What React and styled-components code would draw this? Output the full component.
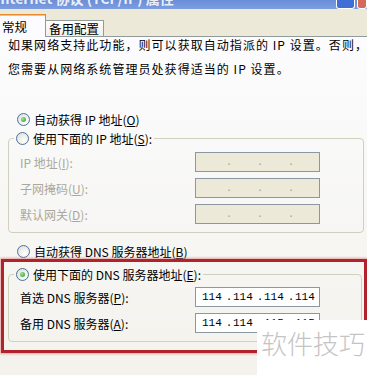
import React from 'react';
import styled, { createGlobalStyle } from 'styled-components';

const GlobalStyle = createGlobalStyle`
  html, body { margin: 0; padding: 0; }
  body {
    font-family: "Noto Sans CJK SC", sans-serif;
    font-size: 12px;
    color: #000;
  }
`;

const Dialog = styled.div`
  position: relative;
  width: 367px;
  height: 375px;
  overflow: hidden;
  display: flex;
  flex-direction: column;
  background: #ece9d8;
`;

const TitleBar = styled.div`
  flex: none;
  height: 9px;
  display: flex;
  align-items: flex-end;
  justify-content: space-between;
  overflow: hidden;
  background: linear-gradient(#6a8ed8, #7c9de0);
`;

const Title = styled.div`
  font: bold 14px/16px "Noto Sans CJK SC", sans-serif;
  color: #fff;
  margin: 0 0 3px -4px;
  white-space: nowrap;
  opacity: 0.85;
`;

const TitleButtons = styled.div`
  display: flex;
  gap: 2px;
  align-self: stretch;
`;

const TitleButton = styled.span`
  width: ${p => p.$w}px;
  height: 8px;
  border: 1px solid #fff;
  border-top: none;
  border-radius: 0 0 3px 3px;
  background: ${p => (p.$close ? '#d46a5a' : '#3d6fd6')};
`;

/* tabs */
const TabStrip = styled.div`
  flex: none;
  height: 27px;
  display: flex;
  align-items: flex-end;
  border-bottom: 1px solid #919b9c;
`;

const Tab = styled.div`
  box-sizing: border-box;
  height: ${p => (p.$active ? 23 : 16)}px;
  margin-bottom: ${p => (p.$active ? -1 : 0)}px;
  padding: ${p => (p.$active ? '0 18px 0 2px' : '0 4px 0 3px')};
  display: flex;
  align-items: center;
  font-size: 12.5px;
  white-space: nowrap;
  border-right: 1px solid #919b9c;
  border-top: ${p => (p.$active ? '1px solid #e68b2c' : '1px solid #919b9c')};
  box-shadow: ${p => (p.$active ? 'inset 0 1px #ffc73c' : 'none')};
  background: ${p => (p.$active ? '#fcfcfe' : 'linear-gradient(#fefefe, #f0efe8)')};
`;

/* page body */
const Page = styled.div`
  flex: 1;
  display: flex;
  flex-direction: column;
  padding: 0 3px 0 8px;
  background: linear-gradient(#fcfcfe, #f3f2ec);
`;

const Description = styled.p`
  margin: -4px 0 0;
  line-height: 24px;
  letter-spacing: 1.05px;
  white-space: nowrap;
`;

const RadioRow = styled.div`
  display: flex;
  align-items: center;
  gap: 4px;
  height: 19px;
  margin-top: ${p => p.$top || 0}px;
  padding-left: ${p => p.$indent || 0}px;
  white-space: nowrap;
`;

const RadioMark = styled.span`
  flex: none;
  box-sizing: border-box;
  width: 13px;
  height: 13px;
  border-radius: 50%;
  border: 1px solid #4f7198;
  background: radial-gradient(circle at 65% 70%, #ffffff, #dcdcd4);
  display: flex;
  align-items: center;
  justify-content: center;

  &::after {
    content: '';
    width: 5px;
    height: 5px;
    border-radius: 50%;
    background: ${p =>
      p.$checked ? 'radial-gradient(circle at 35% 35%, #9fe09a, #24a024)' : 'transparent'};
  }
`;

const Group = styled.fieldset`
  margin: 0;
  padding: ${p => p.$top}px 0 8px 11px;
  border: 1px solid #d0d0bf;
  border-radius: 4px;
  min-width: 0;
`;

const Legend = styled.legend`
  padding: 0 2px;
  margin-left: -6px;
`;

const Fields = styled.div`
  display: grid;
  grid-template-columns: 175px 125px;
  grid-auto-rows: 20px;
  row-gap: 6px;
  align-items: center;
`;

const Label = styled.span`
  color: ${p => (p.$disabled ? '#aca899' : '#000')};
  white-space: nowrap;
`;

const IpBox = styled.div`
  box-sizing: border-box;
  height: 20px;
  display: flex;
  align-items: center;
  padding-left: 6px;
  border: 1px solid #8b98a1;
  background: ${p => (p.$disabled ? '#ece9d8' : '#fff')};
  color: ${p => (p.$disabled ? '#aca899' : '#000')};
  font: 11px "Liberation Mono", monospace;
`;

const Octet = styled.span`
  width: 23px;
`;

const Dot = styled.span`
  width: 8px;
  text-align: center;
`;

const Highlight = styled.div`
  margin: -2px -3px 0 -7px;
  padding: 3px 2px 8px 4px;
  border: 3px solid #b1232c;
  box-shadow: 0 0 2px 1px rgba(222, 130, 130, 0.7);
`;

const Watermark = styled.div`
  position: absolute;
  right: 0;
  bottom: 0;
  width: 110px;
  height: 55px;
  box-sizing: border-box;
  padding: 10px 0 0 4px;
  background: #fff;
  color: #c4c4c4;
  font: 300 26px/26px "Noto Sans CJK SC", sans-serif;
  white-space: nowrap;
`;

const Mn = ({ k }) => (
  <>
    (<u>{k}</u>)
  </>
);

const IpField = ({ value, disabled }) => {
  const parts = value ? value.split('.') : ['', '', '', ''];
  return (
    <IpBox $disabled={disabled}>
      {parts.map((p, i) => (
        <React.Fragment key={i}>
          {i > 0 && <Dot>.</Dot>}
          <Octet>{p}</Octet>
        </React.Fragment>
      ))}
    </IpBox>
  );
};

export default function App() {
  return (
    <>
      <GlobalStyle />
      <Dialog>
        <TitleBar>
          <Title>Internet 协议 (TCP/IP) 属性</Title>
          <TitleButtons>
            <TitleButton $w={17} />
            <TitleButton $w={8} $close />
          </TitleButtons>
        </TitleBar>
        <TabStrip>
          <Tab $active>常规</Tab>
          <Tab>备用配置</Tab>
        </TabStrip>
        <Page>
          <Description>
            如果网络支持此功能，则可以获取自动指派的 IP 设置。否则，
            <br />
            您需要从网络系统管理员处获得适当的 IP 设置。
          </Description>

          <RadioRow $top={29} $indent={9}>
            <RadioMark $checked />
            <span>自动获得 IP 地址<Mn k="O" /></span>
          </RadioRow>

          <Group $top={4}>
            <Legend>
              <RadioRow>
                <RadioMark />
                <span>使用下面的 IP 地址<Mn k="S" />:</span>
              </RadioRow>
            </Legend>
            <Fields>
              <Label $disabled>IP 地址<Mn k="I" />:</Label>
              <IpField disabled />
              <Label $disabled>子网掩码<Mn k="U" />:</Label>
              <IpField disabled />
              <Label $disabled>默认网关<Mn k="D" />:</Label>
              <IpField disabled />
            </Fields>
          </Group>

          <RadioRow $top={9} $indent={9}>
            <RadioMark />
            <span>自动获得 DNS 服务器地址<Mn k="B" /></span>
          </RadioRow>

          <Highlight>
            <Group $top={3}>
              <Legend>
                <RadioRow>
                  <RadioMark $checked />
                  <span>使用下面的 DNS 服务器地址<Mn k="E" />:</span>
                </RadioRow>
              </Legend>
              <Fields>
                <Label>首选 DNS 服务器<Mn k="P" />:</Label>
                <IpField value="114.114.114.114" />
                <Label>备用 DNS 服务器<Mn k="A" />:</Label>
                <IpField value="114.114.115.115" />
              </Fields>
            </Group>
          </Highlight>
        </Page>
        <Watermark>软件技巧</Watermark>
      </Dialog>
    </>
  );
}
